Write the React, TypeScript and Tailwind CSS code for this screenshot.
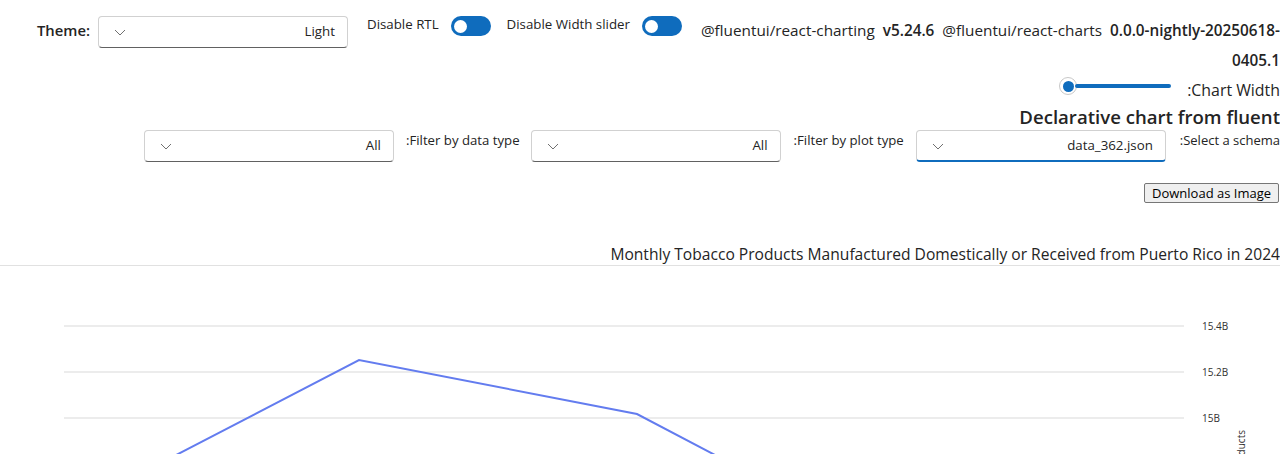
import React from 'react'

const font = { fontFamily: '"Segoe UI", "Open Sans", sans-serif' }

const Chevron = () => (
  <svg width="14" height="12" viewBox="0 0 14 12" className="shrink-0">
    <path d="M2 4 L7 9 L12 4" fill="none" stroke="#707070" strokeWidth="1" />
  </svg>
)

const Dropdown = ({ value, focused }: { value: string; focused?: boolean }) => (
  <div
    className={`flex h-[32px] w-[250px] shrink-0 items-center justify-between rounded-[4px] border border-[#d1d1d1] bg-white pl-[14px] pr-[12px] text-[13.3px] text-[#242424] ${
      focused ? 'border-b-2 border-b-[#0f6cbd]' : 'border-b-[#616161]'
    }`}
  >
    <Chevron />
    <span>{value}</span>
  </div>
)

const Toggle = () => (
  <div className="flex h-[20px] w-[40px] shrink-0 items-center rounded-full bg-[#0f6cbd] px-[3px]">
    <div className="h-[13px] w-[13px] rounded-full bg-white" />
  </div>
)

export default function App() {
  return (
    <div className="w-[1280px] overflow-hidden bg-white text-[#242424]" style={font}>
      {/* top row */}
      <div className="flex items-start pt-[16px]">
        <span className="ml-[37px] mt-[3px] text-[14.8px] font-semibold">Theme:</span>
        <div className="ml-[8px]">
          <Dropdown value="Light" />
        </div>
        <span className="ml-[19px] mt-[-1px] text-[13.3px]">Disable RTL</span>
        <div className="ml-[12px]">
          <Toggle />
        </div>
        <span className="ml-[16px] mt-[-1px] text-[13.3px]">Disable Width slider</span>
        <div className="ml-[12px]">
          <Toggle />
        </div>
        <div className="ml-[17px] mt-[-1px] flex-1 text-right text-[15.3px] leading-[30px] text-[#242424]">
          <div className="flex justify-end gap-[8px] whitespace-nowrap">
            <span>@fluentui/react-charting</span>
            <span className="font-semibold">v5.24.6</span>
            <span>@fluentui/react-charts</span>
            <span className="font-semibold">0.0.0-nightly-20250618-</span>
          </div>
          <div className="font-semibold">0405.1</div>
        </div>
      </div>

      {/* slider */}
      <div className="flex items-start justify-end">
        <div className="mt-[2px] flex w-[112px] items-center">
          <div className="flex h-[18px] w-[18px] items-center justify-center rounded-full border border-[#c8c8c8] bg-white">
            <div className="h-[11px] w-[11px] rounded-full bg-[#0f6cbd]" />
          </div>
          <div className="ml-[-2px] h-[4px] flex-1 rounded-full bg-[#0f6cbd]" />
        </div>
        <span className="ml-[16px] mt-[5px] text-[15.9px] leading-[20px]">:Chart Width</span>
      </div>

      <div className="mt-[4px] text-right text-[18.6px] font-semibold leading-[26px]">
        Declarative chart from fluent
      </div>

      {/* filters */}
      <div className="flex items-start justify-end">
        <Dropdown value="All" />
        <span className="ml-[12px] text-[13.2px] leading-[20px]">:Filter by data type</span>
        <div className="ml-[11px]">
          <Dropdown value="All" />
        </div>
        <span className="ml-[13px] text-[13.2px] leading-[20px]">:Filter by plot type</span>
        <div className="ml-[12px]">
          <Dropdown value="data_362.json" focused />
        </div>
        <span className="ml-[14px] text-[13px] leading-[20px]">:Select a schema</span>
      </div>

      <div className="mt-[21px] flex justify-end pr-[1px]">
        <button className="h-[20px] rounded-[2px] border border-[#767676] bg-[#efefef] px-[7px] text-[13px] leading-[18px] text-black">
          Download as Image
        </button>
      </div>

      <div className="mt-[41px] border-b border-[#e1e1e1] pb-[1px] text-right text-[15.6px] leading-[20px] text-[#242424]">
        Monthly Tobacco Products Manufactured Domestically or Received from Puerto Rico in 2024
      </div>

      <svg width="1280" height="188" className="block">
        {[60, 106, 152].map((y) => (
          <line key={y} x1="64" x2="1184" y1={y} y2={y} stroke="#d9d9d9" strokeWidth="1" />
        ))}
        {[
          ['15.4B', 60],
          ['15.2B', 106],
          ['15B', 152],
        ].map(([t, y]) => (
          <text key={t} x="1202" y={Number(y) + 3.5} fontSize="10" fill="#323130">
            {t}
          </text>
        ))}
        <polyline
          points="160,197.4 359,94 637,148 731,197.4"
          fill="none"
          stroke="#637cef"
          strokeWidth="2"
        />
        <text
          transform="translate(1245,164) rotate(-90)"
          textAnchor="end"
          fontSize="10"
          fill="#323130"
        >
          Tobacco Products
        </text>
      </svg>
    </div>
  )
}
